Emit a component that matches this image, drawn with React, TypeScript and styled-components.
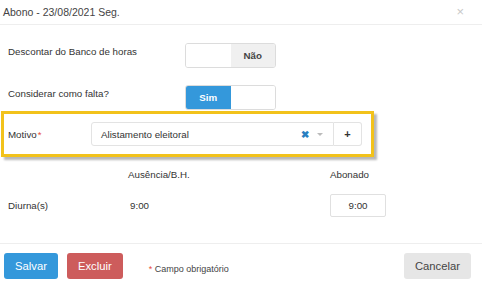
import React, { FC } from 'react';
import styled, { createGlobalStyle } from 'styled-components';

const GlobalStyle = createGlobalStyle`
  body {
    margin: 0;
    background: #fff;
    font-family: 'Liberation Sans', Arial, sans-serif;
    font-size: 9.75px;
    color: #333;
  }
`;

const Modal = styled.div`
  width: 482px;
  height: 285px;
  display: flex;
  flex-direction: column;
  overflow: hidden;
`;

const Header = styled.div`
  height: 25px;
  box-sizing: border-box;
  border-bottom: 1px solid #eeeeee;
  display: flex;
  align-items: center;
  justify-content: space-between;
  padding: 0 18px 1px 3px;
  font-size: 10.5px;
  color: #444;
`;

const Close = styled.span`
  color: #c8c8c8;
  font-size: 13px;
  line-height: 1;
`;

const Body = styled.div`
  display: flex;
  flex-direction: column;
  padding-top: 18px;
`;

const FormRow = styled.div<{ gap?: number }>`
  display: flex;
  align-items: flex-start;
  padding-left: 8px;
  margin-bottom: ${p => p.gap ?? 0}px;
`;

const Label = styled.div<{ width: number; top?: number }>`
  width: ${p => p.width}px;
  flex: none;
  padding-top: ${p => p.top ?? 3}px;
  color: #333;
`;

const Toggle = styled.div`
  display: flex;
  width: 91px;
  height: 25px;
  box-sizing: border-box;
  border: 1px solid #dcdcdc;
  border-radius: 3px;
  overflow: hidden;
`;

const ToggleHalf = styled.div<{ active?: boolean; muted?: boolean }>`
  flex: 1;
  display: flex;
  align-items: center;
  justify-content: center;
  font-weight: ${p => (p.active || p.muted ? 700 : 400)};
  color: ${p => (p.active ? '#fff' : '#444')};
  background: ${p => (p.active ? '#3498db' : p.muted ? '#f0f0f0' : '#fff')};
`;

const Highlight = styled.div`
  margin: 1px 0 0 1px;
  width: 373px;
  height: 46px;
  box-sizing: border-box;
  border: 3px solid #f2c21b;
  box-shadow: 3px 3px 2px rgba(0, 0, 0, 0.28);
  display: flex;
  align-items: center;
  padding-left: 4px;
`;

const Required = styled.span<{ gap?: number }>`
  color: #e74c3c;
  margin-left: ${p => p.gap ?? 1}px;
`;

const Select = styled.div`
  width: 243px;
  height: 24px;
  box-sizing: border-box;
  border: 1px solid #e3e3e3;
  border-radius: 3px 0 0 3px;
  display: flex;
  align-items: center;
  padding-left: 9px;
`;

const SelectText = styled.span`
  flex: 1;
  color: #333;
`;

const Clear = styled.span`
  color: #2a7fc1;
  font-weight: 700;
  font-size: 10px;
  margin-right: 8px;
`;

const Caret = styled.span`
  width: 0;
  height: 0;
  border-left: 3px solid transparent;
  border-right: 3px solid transparent;
  border-top: 3px solid #bbb;
  margin-right: 10px;
`;

const AddButton = styled.div`
  width: 28px;
  height: 24px;
  box-sizing: border-box;
  border: 1px solid #e3e3e3;
  border-left: none;
  border-radius: 0 3px 3px 0;
  display: flex;
  align-items: center;
  justify-content: center;
  font-weight: 700;
  font-size: 11px;
  color: #333;
`;

const Table = styled.div`
  display: grid;
  grid-template-columns: 120px 202px 56px;
  padding-left: 8px;
  margin-top: 6px;
  row-gap: 8px;
  align-items: center;
`;

const Cell = styled.div<{ pad?: number }>`
  height: 23px;
  display: flex;
  align-items: center;
  padding-left: ${p => p.pad ?? 0}px;
`;

const TimeInput = styled.div`
  width: 56px;
  height: 23px;
  box-sizing: border-box;
  border: 1px solid #e0e0e0;
  border-radius: 2px;
  display: flex;
  align-items: center;
  justify-content: center;
`;

const Footer = styled.div`
  margin-top: 26px;
  border-top: 1px solid #eeeeee;
  padding: 9px 11px 0 4px;
  display: flex;
  align-items: center;
`;

const Button = styled.div<{ variant: 'primary' | 'danger' | 'default' }>`
  height: 26px;
  padding: 0 11px;
  border-radius: 3px;
  display: flex;
  align-items: center;
  font-size: 11.25px;
  margin-right: 9px;
  color: ${p => (p.variant === 'default' ? '#444' : '#fff')};
  background: ${p =>
    p.variant === 'primary' ? '#3498db' : p.variant === 'danger' ? '#cd5c5c' : '#e6e6e6'};

  &:last-child {
    margin-right: 0;
  }
`;

const Note = styled.div`
  margin-left: 17px;
  margin-top: 5px;
  font-size: 9px;
  color: #444;
  flex: 1;
`;

const App: FC = () => (
  <>
    <GlobalStyle />
    <Modal>
      <Header>
        <span>Abono - 23/08/2021 Seg.</span>
        <Close>×</Close>
      </Header>
      <Body>
        <FormRow gap={17}>
          <Label width={177}>Descontar do Banco de horas</Label>
          <Toggle>
            <ToggleHalf />
            <ToggleHalf muted>Não</ToggleHalf>
          </Toggle>
        </FormRow>
        <FormRow>
          <Label width={177}>Considerar como falta?</Label>
          <Toggle>
            <ToggleHalf active>Sim</ToggleHalf>
            <ToggleHalf />
          </Toggle>
        </FormRow>
        <Highlight>
          <Label width={83} top={0}>
            Motivo<Required>*</Required>
          </Label>
          <Select>
            <SelectText>Alistamento eleitoral</SelectText>
            <Clear>✖</Clear>
            <Caret />
          </Select>
          <AddButton>+</AddButton>
        </Highlight>
        <Table>
          <Cell />
          <Cell>Ausência/B.H.</Cell>
          <Cell>Abonado</Cell>
          <Cell>Diurna(s)</Cell>
          <Cell pad={2}>9:00</Cell>
          <TimeInput>9:00</TimeInput>
        </Table>
        <Footer>
          <Button variant="primary">Salvar</Button>
          <Button variant="danger">Excluir</Button>
          <Note>
            <Required gap={0}>*</Required> Campo obrigatório
          </Note>
          <Button variant="default">Cancelar</Button>
        </Footer>
      </Body>
    </Modal>
  </>
);

export default App;
